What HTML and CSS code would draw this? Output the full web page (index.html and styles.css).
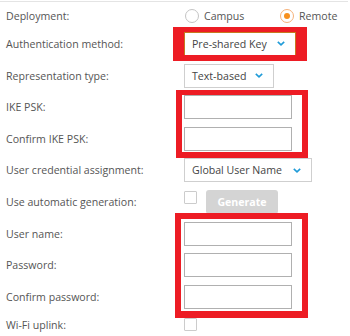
FILE: index.html
```html
<!DOCTYPE html>
<html>
<head>
<meta charset="utf-8">
<link rel="stylesheet" href="styles.css">
</head>
<body>
<div class="page">
  <div class="form">
    <div class="row row-first">
      <div class="label">Deployment:</div>
      <div class="ctrl">
        <span class="radio-opt radio-campus"><span class="radio"></span>Campus</span>
        <span class="radio-opt"><span class="radio radio-on"></span>Remote</span>
      </div>
    </div>
    <div class="row">
      <div class="label">Authentication method:</div>
      <div class="ctrl">
        <div class="select select-focus select-auth"><span>Pre-shared Key</span><svg class="chev" width="8" height="5" viewBox="0 0 8 5"><path d="M0.8 0.8 L4 3.8 L7.2 0.8" fill="none" stroke="#1f9bd8" stroke-width="1.6"/></svg></div>
      </div>
    </div>
    <div class="row">
      <div class="label">Representation type:</div>
      <div class="ctrl">
        <div class="select select-repr"><span>Text-based</span><svg class="chev" width="8" height="5" viewBox="0 0 8 5"><path d="M0.8 0.8 L4 3.8 L7.2 0.8" fill="none" stroke="#1f9bd8" stroke-width="1.6"/></svg></div>
      </div>
    </div>
    <div class="row">
      <div class="label">IKE PSK:</div>
      <div class="ctrl"><div class="input"></div></div>
    </div>
    <div class="row">
      <div class="label">Confirm IKE PSK:</div>
      <div class="ctrl"><div class="input"></div></div>
    </div>
    <div class="row">
      <div class="label">User credential assignment:</div>
      <div class="ctrl">
        <div class="select select-uca"><span>Global User Name</span><svg class="chev" width="8" height="5" viewBox="0 0 8 5"><path d="M0.8 0.8 L4 3.8 L7.2 0.8" fill="none" stroke="#1f9bd8" stroke-width="1.6"/></svg></div>
      </div>
    </div>
    <div class="row">
      <div class="label">Use automatic generation:</div>
      <div class="ctrl ctrl-gen">
        <span class="checkbox checkbox-top"></span>
        <span class="btn">Generate</span>
      </div>
    </div>
    <div class="row">
      <div class="label">User name:</div>
      <div class="ctrl"><div class="input"></div></div>
    </div>
    <div class="row">
      <div class="label">Password:</div>
      <div class="ctrl"><div class="input"></div></div>
    </div>
    <div class="row">
      <div class="label">Confirm password:</div>
      <div class="ctrl"><div class="input"></div></div>
    </div>
    <div class="row row-last">
      <div class="label">Wi-Fi uplink:</div>
      <div class="ctrl"><span class="checkbox"></span></div>
    </div>
  </div>
  <div class="mark mark-1"></div>
  <div class="mark mark-2"></div>
  <div class="mark mark-3"></div>
</div>
</body>
</html>
```

FILE: styles.css
```css
html, body {
  margin: 0;
  padding: 0;
  background: #ffffff;
}

.page {
  position: relative;
  width: 350px;
  height: 336px;
  overflow: hidden;
  font-family: "Open Sans", "Liberation Sans", sans-serif;
  font-size: 10.6px;
  color: #555555;
}

.form {
  margin-top: 1px;
  border-top: 1px solid #e4e4e4;
  width: 348px;
}

.row {
  display: flex;
  align-items: center;
  height: 31.6px;
}

.row-first {
  height: 24.2px;
  padding-top: 2px;
}

.row-last {
  height: 24px;
}

.label {
  flex: none;
  width: 178px;
  padding-left: 6px;
  white-space: nowrap;
}

.ctrl {
  display: flex;
  align-items: center;
}

.ctrl-gen {
  align-self: stretch;
  align-items: center;
}

.radio-opt {
  display: flex;
  align-items: center;
  color: #555555;
}

.radio-campus {
  width: 95px;
  margin-left: 1px;
}

.radio {
  box-sizing: border-box;
  width: 14px;
  height: 14px;
  border: 1px solid #c4c4c4;
  border-radius: 50%;
  margin-right: 5px;
  display: flex;
  align-items: center;
  justify-content: center;
}

.radio-on {
  border-color: #f6b27a;
}

.radio-on::after {
  content: "";
  width: 6px;
  height: 6px;
  border-radius: 50%;
  background: #f7901e;
}

.select {
  box-sizing: border-box;
  height: 24px;
  border: 1px solid #cfcfcf;
  display: flex;
  align-items: center;
  padding: 0 10px 0 7px;
  color: #444444;
  background: #ffffff;
}

.select-focus {
  border-color: #c57a1f;
}

.select-auth {
  width: 112px;
}

.select-repr {
  width: 90px;
}

.select-uca {
  width: 128px;
}

.chev {
  margin-left: auto;
  display: block;
}

.input {
  box-sizing: border-box;
  width: 108px;
  height: 24px;
  border: 1px solid #b0b0b0;
  background: #ffffff;
}

.checkbox {
  box-sizing: border-box;
  width: 13px;
  height: 13px;
  border: 1px solid #cccccc;
  border-radius: 1px;
  background: #ffffff;
}

.checkbox-top {
  align-self: flex-start;
  margin-top: 5px;
}

.btn {
  box-sizing: border-box;
  margin-left: 9px;
  width: 72px;
  height: 24px;
  border-radius: 3px;
  background: #d4d4d4;
  color: #ffffff;
  font-weight: 700;
  display: flex;
  align-items: center;
  justify-content: center;
}

.mark {
  position: absolute;
  box-sizing: border-box;
  border: 6px solid #ed1c24;
}

.mark-1 {
  left: 173px;
  top: 27px;
  width: 134px;
  height: 34px;
  border-width: 5px 11px 6px 11px;
}

.mark-2 {
  left: 176px;
  top: 90px;
  width: 132px;
  height: 68px;
  border-top-width: 5px;
}

.mark-3 {
  left: 175px;
  top: 213px;
  width: 133px;
  height: 105px;
  border-bottom-width: 7px;
}
```
